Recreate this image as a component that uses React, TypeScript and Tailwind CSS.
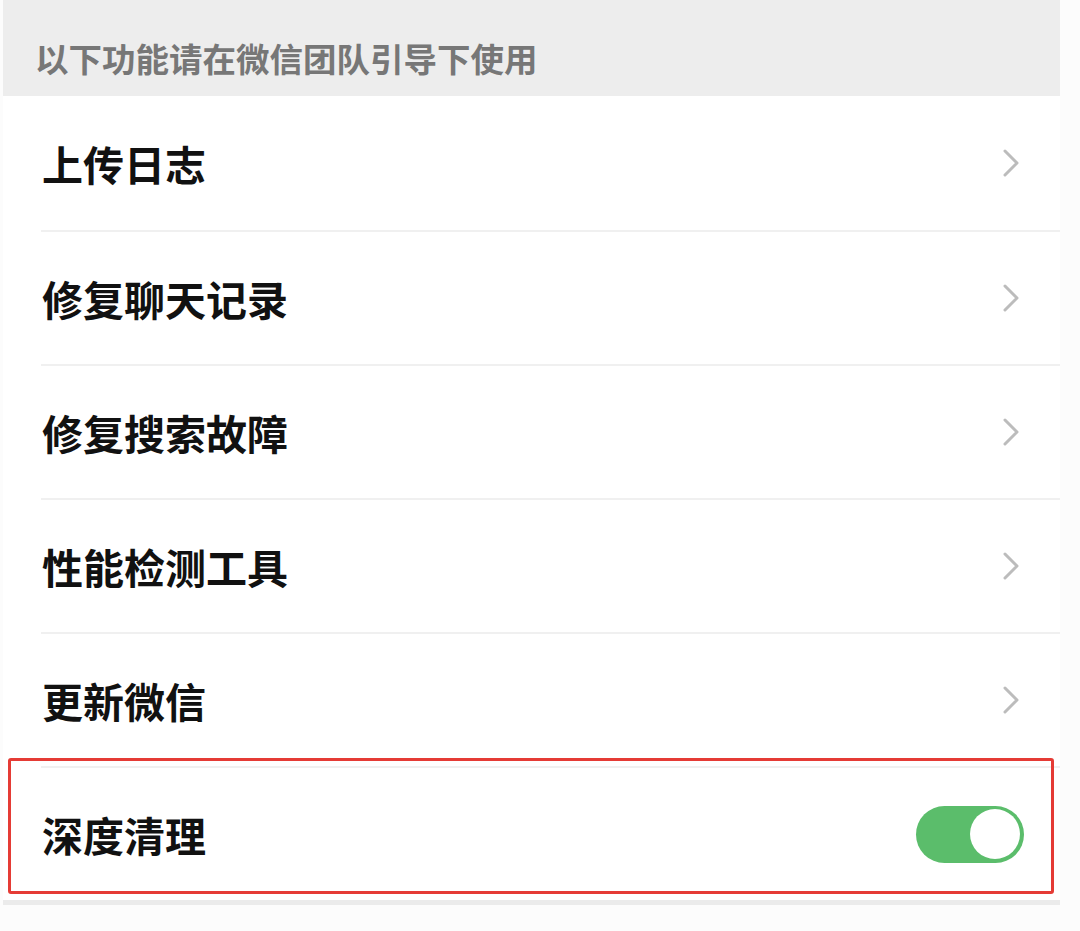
import React from "react";

const items = ["上传日志", "修复聊天记录", "修复搜索故障", "性能检测工具", "更新微信"];

function Chevron() {
  return (
    <svg width="18" height="30" viewBox="0 0 18 30" fill="none" className="mr-[40px]">
      <path d="M3 3 L15 15 L3 27" stroke="#bcbcbc" strokeWidth="3" strokeLinecap="round" strokeLinejoin="round" />
    </svg>
  );
}

export default function App() {
  return (
    <div
      className="relative w-[1080px] h-[931px] bg-[#fcfcfc] overflow-hidden"
      style={{ fontFamily: '"Noto Sans CJK SC", "Noto Sans", sans-serif' }}
    >
      <div className="ml-[3px] w-[1057px] bg-white">
        <div className="h-[96px] bg-[#ededed] flex items-center pl-[32px] pt-[20px]">
          <span className="text-[33.5px] font-semibold text-[#777777] leading-none">以下功能请在微信团队引导下使用</span>
        </div>

        {items.map((t, i) => (
          <div key={t} className={i === 0 ? "" : "ml-[38px] border-t-2 border-[#f0f0f0]"}>
            <div className={"flex items-center justify-between " + (i === 0 ? "pl-[39px] h-[134px]" : "pl-[1px] h-[132px]")}>
              <span className="text-[41px] font-semibold text-[#111111] leading-none">{t}</span>
              <Chevron />
            </div>
          </div>
        ))}

        <div className="ml-[38px] border-t-2 border-[#f0f0f0]">
          <div className="h-[132px] flex items-center justify-between pl-[1px]">
            <span className="text-[41px] font-semibold text-[#111111] leading-none">深度清理</span>
            <div className="mr-[36px] w-[108px] h-[57px] rounded-full bg-[#5bbd6b] flex items-center justify-end pr-[4px]">
              <div className="w-[50px] h-[50px] rounded-full bg-white" />
            </div>
          </div>
        </div>

        <div className="h-[5px] bg-[#ebebeb]" />
      </div>

      <div className="absolute left-[8px] top-[758px] w-[1046px] h-[136px] border-[3px] border-[#e53b35] rounded-[3px]" />
    </div>
  );
}
